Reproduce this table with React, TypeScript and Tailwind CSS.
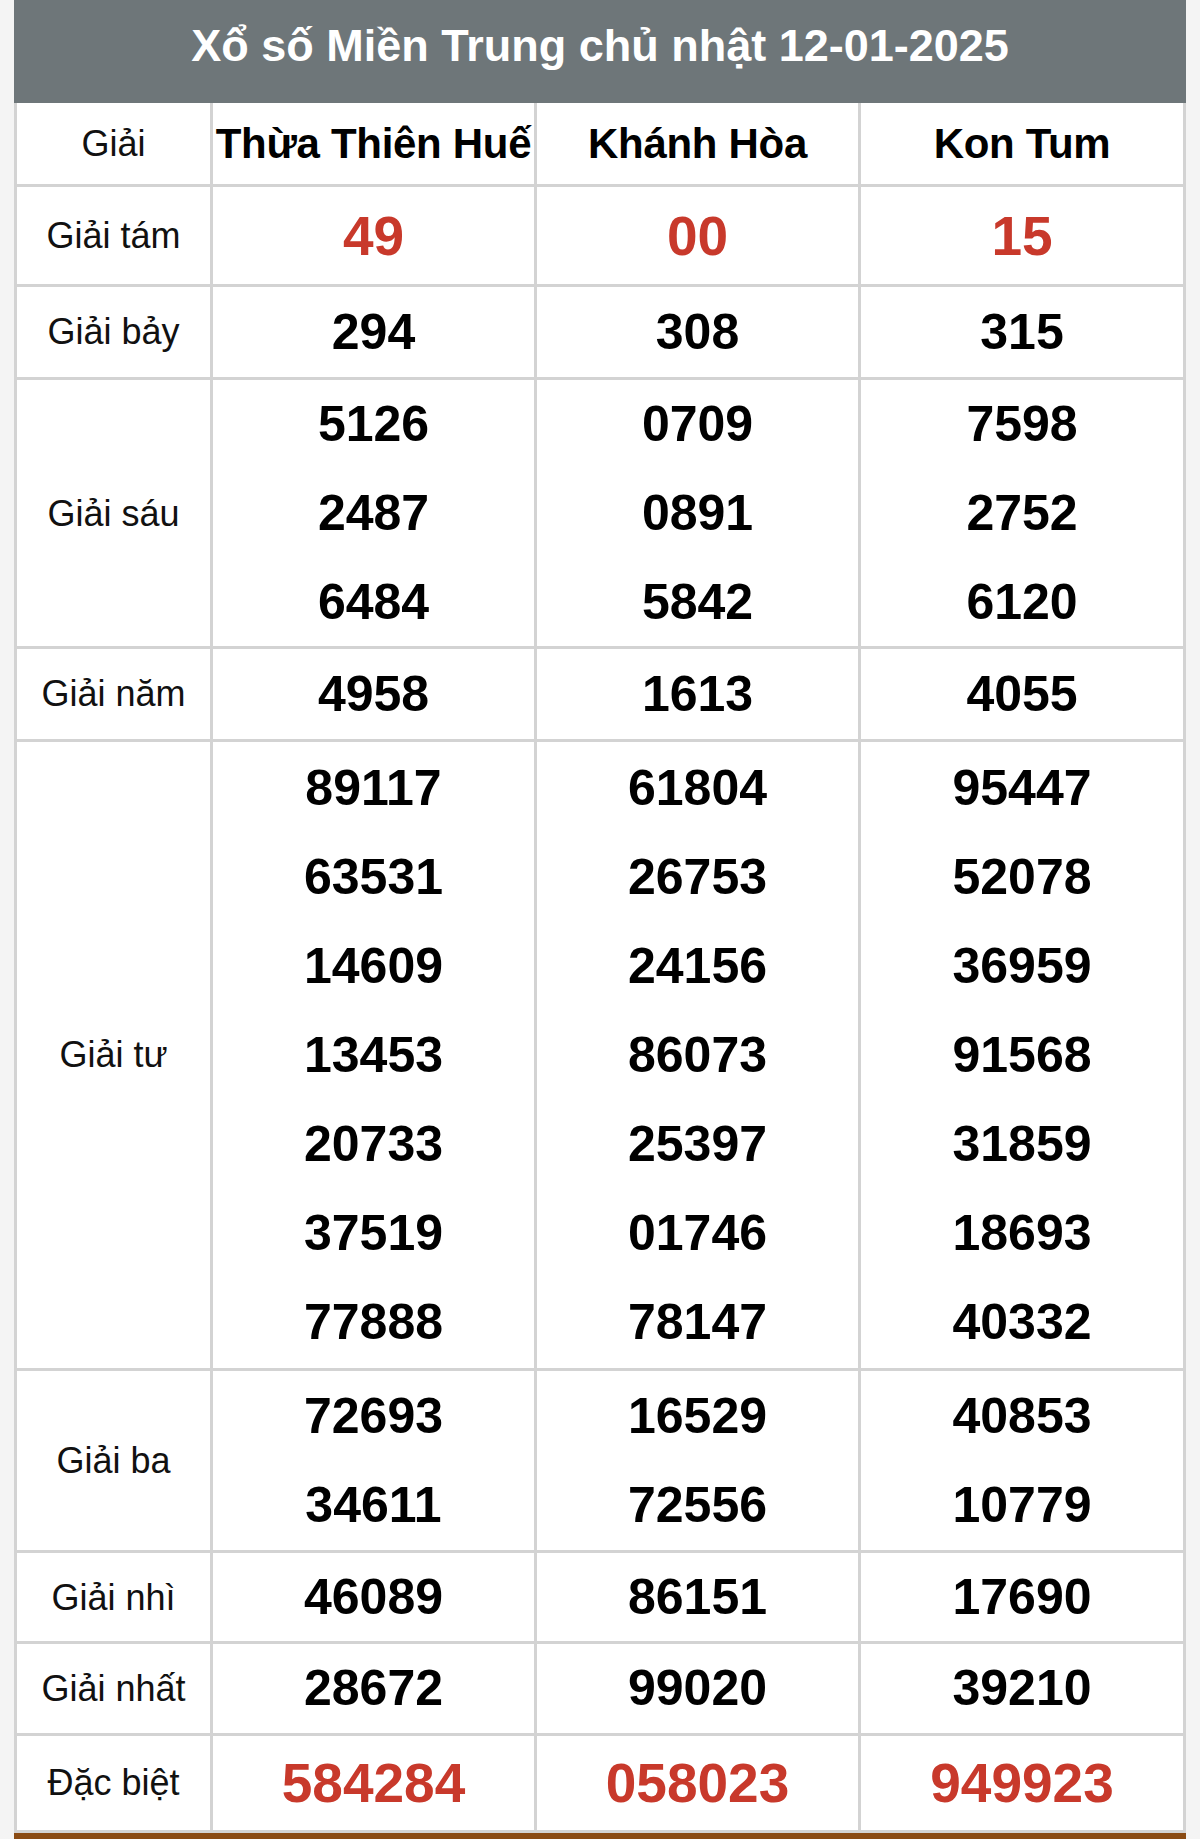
import React from "react";

type Row = {
  label: string;
  h: string;
  red?: boolean;
  values: string[][];
};

const rows: Row[] = [
  { label: "Giải tám", h: "h-[100px]", red: true, values: [["49"], ["00"], ["15"]] },
  { label: "Giải bảy", h: "h-[93px]", values: [["294"], ["308"], ["315"]] },
  {
    label: "Giải sáu",
    h: "h-[269px]",
    values: [
      ["5126", "2487", "6484"],
      ["0709", "0891", "5842"],
      ["7598", "2752", "6120"],
    ],
  },
  { label: "Giải năm", h: "h-[93px]", values: [["4958"], ["1613"], ["4055"]] },
  {
    label: "Giải tư",
    h: "h-[629px]",
    values: [
      ["89117", "63531", "14609", "13453", "20733", "37519", "77888"],
      ["61804", "26753", "24156", "86073", "25397", "01746", "78147"],
      ["95447", "52078", "36959", "91568", "31859", "18693", "40332"],
    ],
  },
  {
    label: "Giải ba",
    h: "h-[182px]",
    values: [
      ["72693", "34611"],
      ["16529", "72556"],
      ["40853", "10779"],
    ],
  },
  { label: "Giải nhì", h: "h-[91px]", values: [["46089"], ["86151"], ["17690"]] },
  { label: "Giải nhất", h: "h-[92px]", values: [["28672"], ["99020"], ["39210"]] },
  { label: "Đặc biệt", h: "h-[97px]", red: true, values: [["584284"], ["058023"], ["949923"]] },
];

const grid = "grid grid-cols-[196px_324px_324px_325px] border-b-[3px] border-[#d3d3d3]";

export default function App() {
  return (
    <div className="min-h-screen w-full bg-[#f4f4f4] px-[14px] font-['Liberation_Sans',Arial,sans-serif]">
      <div className="w-[1172px] bg-white">
        {/* Title */}
        <div className="h-[103px] bg-[#6e7679] flex items-center justify-center pb-[12px]">
          <h1 className="text-[45px] font-bold text-white leading-none">
            Xổ số Miền Trung chủ nhật 12-01-2025
          </h1>
        </div>

        <div className="border-l-[3px] border-[#d3d3d3]">
          {/* Header row */}
          <div className={`${grid} h-[84px]`}>
            <div className="border-r-[3px] border-[#d3d3d3] flex items-center justify-center text-[36px] text-[#111]">
              Giải
            </div>
            {["Thừa Thiên Huế", "Khánh Hòa", "Kon Tum"].map((p) => (
              <div
                key={p}
                className="border-r-[3px] border-[#d3d3d3] flex items-center justify-center text-[42px] font-bold text-black whitespace-nowrap tracking-[-0.3px]"
              >
                {p}
              </div>
            ))}
          </div>

          {rows.map((r) => (
            <div key={r.label} className={`${grid} ${r.h}`}>
              <div className="border-r-[3px] border-[#d3d3d3] flex items-center justify-center text-[36px] text-[#111]">
                {r.label}
              </div>
              {r.values.map((col, i) => (
                <div
                  key={i}
                  className="border-r-[3px] border-[#d3d3d3] flex flex-col items-center justify-center"
                >
                  {col.map((n, j) => (
                    <div
                      key={j}
                      className={
                        r.red
                          ? "text-[55px] font-bold text-[#c8392b] leading-[90px]"
                          : "text-[50px] font-bold text-black leading-[89px]"
                      }
                    >
                      {n}
                    </div>
                  ))}
                </div>
              ))}
            </div>
          ))}
        </div>
        <div className="h-[6px] bg-[#8a4b14]" />
      </div>
    </div>
  );
}
